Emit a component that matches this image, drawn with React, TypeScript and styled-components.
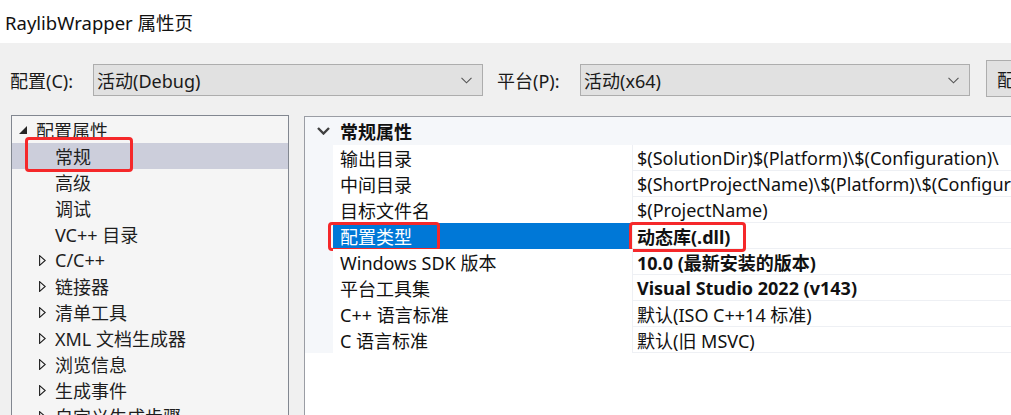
import React from "react";
import styled, { createGlobalStyle } from "styled-components";

const Global = createGlobalStyle`
  html, body { margin: 0; padding: 0; }
  body {
    font-family: "Segoe UI", "Noto Sans", "Noto Sans CJK SC", sans-serif;
    color: #1a1a1a;
    overflow: hidden;
  }
`;

const Window = styled.div`
  width: 1011px;
  height: 415px;
  overflow: hidden;
  background: #f0f0f0;
  font-size: 18px;
`;

const TitleBar = styled.div`
  height: 43px;
  background: #ffffff;
  display: flex;
  align-items: center;
  padding-left: 5px;
  font-size: 18.5px;
  color: #111;
`;

const Toolbar = styled.div`
  height: 72px;
  display: flex;
  align-items: flex-start;
  padding: 21px 0 0 10px;
  box-sizing: border-box;
  white-space: nowrap;
`;

const FieldLabel = styled.div<{ $gap?: number }>`
  width: 83px;
  height: 32px;
  margin-left: ${(p) => p.$gap ?? 0}px;
  display: flex;
  align-items: center;
  flex-shrink: 0;
`;

const Combo = styled.div`
  width: 390px;
  height: 32px;
  box-sizing: border-box;
  border: 1px solid #adadad;
  background: #e1e1e1;
  display: flex;
  align-items: center;
  justify-content: space-between;
  padding: 0 10px 0 3px;
  flex-shrink: 0;
`;

const Button = styled.div`
  margin-left: 16px;
  margin-top: -4px;
  width: 120px;
  height: 37px;
  box-sizing: border-box;
  border: 1px solid #adadad;
  background: #e1e1e1;
  display: flex;
  align-items: center;
  padding-left: 10px;
  flex-shrink: 0;
`;

const Main = styled.div`
  display: flex;
  align-items: flex-start;
  gap: 15px;
  padding-left: 11px;
`;

const TreePanel = styled.div`
  width: 278px;
  height: 320px;
  flex-shrink: 0;
  box-sizing: border-box;
  border: 1px solid #828790;
  background: #f5f5f5;
  padding-top: 1px;
`;

const TreeRow = styled.div<{ $selected?: boolean }>`
  position: relative;
  height: 26px;
  display: flex;
  align-items: center;
  background: ${(p) => (p.$selected ? "#cccedb" : "transparent")};
  color: #1e1e1e;
  white-space: nowrap;
`;

const Expander = styled.span<{ $indent: number }>`
  width: ${(p) => p.$indent}px;
  flex-shrink: 0;
  display: flex;
  align-items: center;
  justify-content: flex-end;
  padding-right: 9px;
  box-sizing: border-box;
`;

const Highlight = styled.div<{ $l: number; $t: number; $w: number; $h: number }>`
  position: absolute;
  left: ${(p) => p.$l}px;
  top: ${(p) => p.$t}px;
  width: ${(p) => p.$w}px;
  height: ${(p) => p.$h}px;
  box-sizing: border-box;
  border: 3px solid #f5282a;
  border-radius: 4px;
  pointer-events: none;
`;

const PropPanel = styled.div`
  margin-top: 1px;
  width: 760px;
  height: 320px;
  flex-shrink: 0;
  box-sizing: border-box;
  border: 1px solid #9a9da4;
  border-right: none;
  background: #ffffff;
`;

const CategoryRow = styled.div`
  height: 28px;
  display: flex;
  align-items: center;
  background: #f5f7fa;
  font-weight: 700;
  color: #111;
`;

const CategoryToggle = styled.span`
  width: 35px;
  display: flex;
  justify-content: center;
  padding-left: 1px;
  box-sizing: border-box;
`;

const PropRow = styled.div`
  display: grid;
  grid-template-columns: 28px 300px 1fr;
  height: 26px;
  box-sizing: border-box;
  border-bottom: 1px solid #eef0f4;
`;

const Gutter = styled.div`
  background: #f5f7fa;
`;

const NameCell = styled.div<{ $selected?: boolean }>`
  position: relative;
  display: flex;
  align-items: center;
  padding-left: 7px;
  box-sizing: border-box;
  border-right: 1px solid #eef0f4;
  background: ${(p) => (p.$selected ? "#0078d7" : "#ffffff")};
  color: ${(p) => (p.$selected ? "#ffffff" : "#111")};
  white-space: nowrap;
`;

const ValueCell = styled.div<{ $bold?: boolean }>`
  position: relative;
  display: flex;
  align-items: center;
  padding-left: 4px;
  white-space: nowrap;
  overflow: visible;
  font-weight: ${(p) => (p.$bold ? 700 : 400)};
  color: #111;
`;

const ComboChevron = () => (
  <svg width="11" height="7" viewBox="0 0 11 7">
    <polyline points="0.5,0.8 5.5,5.8 10.5,0.8" fill="none" stroke="#555" strokeWidth="1.1" />
  </svg>
);

const ExpandedTri = () => (
  <svg width="8" height="8" viewBox="0 0 8 8">
    <polygon points="8,0 8,8 0,8" fill="#262626" />
  </svg>
);

const CollapsedTri = () => (
  <svg width="7" height="11" viewBox="0 0 7 11">
    <polygon points="0.6,0.6 6.2,5.5 0.6,10.4" fill="none" stroke="#1e1e1e" strokeWidth="1.1" />
  </svg>
);

const CategoryChevron = () => (
  <svg width="13" height="8" viewBox="0 0 13 8">
    <polyline points="1,1 6.5,6.5 12,1" fill="none" stroke="#404040" strokeWidth="2.4" />
  </svg>
);

type TreeItem = { label: string; level: 0 | 1; expandable?: boolean; expanded?: boolean; selected?: boolean };

const treeItems: TreeItem[] = [
  { label: "配置属性", level: 0, expandable: true, expanded: true },
  { label: "常规", level: 1, selected: true },
  { label: "高级", level: 1 },
  { label: "调试", level: 1 },
  { label: "VC++ 目录", level: 1 },
  { label: "C/C++", level: 1, expandable: true },
  { label: "链接器", level: 1, expandable: true },
  { label: "清单工具", level: 1, expandable: true },
  { label: "XML 文档生成器", level: 1, expandable: true },
  { label: "浏览信息", level: 1, expandable: true },
  { label: "生成事件", level: 1, expandable: true },
  { label: "自定义生成步骤", level: 1, expandable: true },
];

type Prop = { name: string; value: string; bold?: boolean; selected?: boolean };

const props: Prop[] = [
  { name: "输出目录", value: "$(SolutionDir)$(Platform)\\$(Configuration)\\" },
  { name: "中间目录", value: "$(ShortProjectName)\\$(Platform)\\$(Configuration)\\" },
  { name: "目标文件名", value: "$(ProjectName)" },
  { name: "配置类型", value: "动态库(.dll)", bold: true, selected: true },
  { name: "Windows SDK 版本", value: "10.0 (最新安装的版本)", bold: true },
  { name: "平台工具集", value: "Visual Studio 2022 (v143)", bold: true },
  { name: "C++ 语言标准", value: "默认(ISO C++14 标准)" },
  { name: "C 语言标准", value: "默认(旧 MSVC)" },
];

export default function App() {
  return (
    <>
      <Global />
      <Window>
        <TitleBar>RaylibWrapper 属性页</TitleBar>
        <Toolbar>
          <FieldLabel>配置(C):</FieldLabel>
          <Combo>
            <span>活动(Debug)</span>
            <ComboChevron />
          </Combo>
          <FieldLabel $gap={14}>平台(P):</FieldLabel>
          <Combo>
            <span>活动(x64)</span>
            <ComboChevron />
          </Combo>
          <Button>配置管理器(O)...</Button>
        </Toolbar>
        <Main>
          <TreePanel>
            {treeItems.map((item) => (
              <TreeRow key={item.label} $selected={item.selected}>
                <Expander $indent={item.level === 0 ? 24 : 43}>
                  {item.expandable ? item.expanded ? <ExpandedTri /> : <CollapsedTri /> : null}
                </Expander>
                {item.label}
                {item.selected && <Highlight $l={13} $t={-6} $w={108} $h={35} />}
              </TreeRow>
            ))}
          </TreePanel>
          <PropPanel>
            <CategoryRow>
              <CategoryToggle>
                <CategoryChevron />
              </CategoryToggle>
              常规属性
            </CategoryRow>
            {props.map((p) => (
              <PropRow key={p.name}>
                <Gutter />
                <NameCell $selected={p.selected}>
                  {p.name}
                  {p.selected && <Highlight $l={-5} $t={-1} $w={112} $h={29} />}
                </NameCell>
                <ValueCell $bold={p.bold}>
                  {p.value}
                  {p.selected && <Highlight $l={-4} $t={-1} $w={117} $h={30} />}
                </ValueCell>
              </PropRow>
            ))}
          </PropPanel>
        </Main>
      </Window>
    </>
  );
}
